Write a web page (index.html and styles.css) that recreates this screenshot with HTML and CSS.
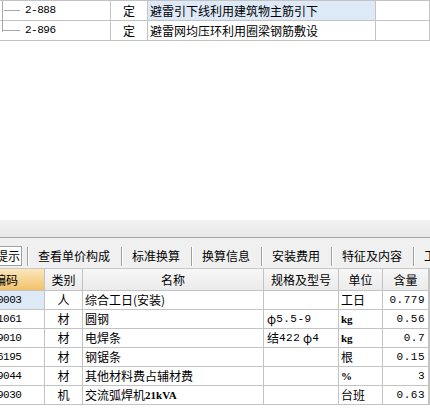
FILE: index.html
```html
<!DOCTYPE html>
<html lang="zh">
<head>
<meta charset="utf-8">
<link rel="stylesheet" href="styles.css">
</head>
<body>
<div class="top-grid">
  <span class="tree-v"></span>
  <div class="trow">
    <div class="cell tree"><span class="branch"></span><span class="num code">2-888</span></div>
    <div class="cell center">定</div>
    <div class="cell name sel">避雷引下线利用建筑物主筋引下</div>
    <div class="cell"></div>
  </div>
  <div class="trow">
    <div class="cell tree"><span class="branch last"></span><span class="num code">2-896</span></div>
    <div class="cell center">定</div>
    <div class="cell name">避雷网均压环利用圈梁钢筋敷设</div>
    <div class="cell"></div>
  </div>
</div>

<div class="blank"></div>
<div class="splitter"></div>

<div class="tabs">
  <div class="tabs-inner">
    <div class="tab active">提示</div>
    <span class="divider"></span>
    <div class="tab">查看单价构成</div>
    <span class="divider"></span>
    <div class="tab">标准换算</div>
    <span class="divider"></span>
    <div class="tab">换算信息</div>
    <span class="divider"></span>
    <div class="tab">安装费用</div>
    <span class="divider"></span>
    <div class="tab">特征及内容</div>
    <span class="divider"></span>
    <div class="tab">工程量明细</div>
  </div>
</div>

<div class="btable">
  <div class="brow bhead">
    <div class="cell hcell hsel"><span class="shift">编码</span></div>
    <div class="cell hcell">类别</div>
    <div class="cell hcell">名称</div>
    <div class="cell hcell">规格及型号</div>
    <div class="cell hcell">单位</div>
    <div class="cell hcell">含量</div>
    <div class="cell hcell"></div>
  </div>
  <div class="brow">
    <div class="cell rsel"><span class="num code shift3">0003</span></div>
    <div class="cell center">人</div>
    <div class="cell txt">综合工日(安装)</div>
    <div class="cell txt spec"></div>
    <div class="cell txt unit">工日</div>
    <div class="cell qty"><span class="num">0.779</span></div>
    <div class="cell"></div>
  </div>
  <div class="brow">
    <div class="cell"><span class="num code shift3">1061</span></div>
    <div class="cell center">材</div>
    <div class="cell txt">圆钢</div>
    <div class="cell txt spec">φ<span class="num">5.5-9</span></div>
    <div class="cell txt unit"><span class="ser">kg</span></div>
    <div class="cell qty"><span class="num">0.56</span></div>
    <div class="cell"></div>
  </div>
  <div class="brow">
    <div class="cell"><span class="num code shift3">9010</span></div>
    <div class="cell center">材</div>
    <div class="cell txt">电焊条</div>
    <div class="cell txt spec">结<span class="num">422</span>&nbsp;φ<span class="num">4</span></div>
    <div class="cell txt unit"><span class="ser">kg</span></div>
    <div class="cell qty"><span class="num">0.7</span></div>
    <div class="cell"></div>
  </div>
  <div class="brow">
    <div class="cell"><span class="num code shift3">6195</span></div>
    <div class="cell center">材</div>
    <div class="cell txt">钢锯条</div>
    <div class="cell txt spec"></div>
    <div class="cell txt unit">根</div>
    <div class="cell qty"><span class="num">0.15</span></div>
    <div class="cell"></div>
  </div>
  <div class="brow">
    <div class="cell"><span class="num code shift3">9044</span></div>
    <div class="cell center">材</div>
    <div class="cell txt">其他材料费占辅材费</div>
    <div class="cell txt spec"></div>
    <div class="cell txt unit"><span class="ser">%</span></div>
    <div class="cell qty"><span class="num">3</span></div>
    <div class="cell"></div>
  </div>
  <div class="brow">
    <div class="cell"><span class="num code shift3">9030</span></div>
    <div class="cell center">机</div>
    <div class="cell txt">交流弧焊机<span class="ser">21kVA</span></div>
    <div class="cell txt spec"></div>
    <div class="cell txt unit">台班</div>
    <div class="cell qty"><span class="num">0.63</span></div>
    <div class="cell"></div>
  </div>
</div>
</body>
</html>
```
FILE: styles.css
```css
* { box-sizing: border-box; }

body {
  margin: 0;
  width: 430px;
  height: 408px;
  overflow: hidden;
  background: #fff;
  color: #000;
  font-family: "Noto Sans CJK SC", "Noto Sans", sans-serif;
  font-size: 12px;
}

.cell {
  display: flex;
  align-items: center;
  overflow: hidden;
  white-space: nowrap;
  line-height: 1;
  border-right: 1px solid #c3c3c3;
  border-bottom: 1px solid #c3c3c3;
}

.center { justify-content: center; }

.num {
  font-family: "Liberation Mono", "DejaVu Sans Mono", monospace;
  font-size: 11px;
  letter-spacing: 0.5px;
}

.code { letter-spacing: -0.5px; }

.ser {
  font-family: "Liberation Serif", serif;
  font-size: 11px;
  font-weight: bold;
}

/* top tree grid */
.top-grid {
  position: relative;
  border-top: 1px solid #c3c3c3;
}

.tree-v {
  position: absolute;
  left: 2px;
  top: 0;
  width: 1px;
  height: 31px;
  background: #a8a8a8;
}

.trow {
  display: grid;
  grid-template-columns: 111px 37px 228px 54px;
  height: 20px;
}

.tree {
  padding-left: 4px;
}

.branch {
  width: 16px;
  height: 1px;
  background: #a8a8a8;
  margin-right: 5px;
}

.branch.last {
  margin-left: -2px;
  width: 18px;
}

.name { padding-left: 2px; }

.sel { background: #dde9f7; }

.blank { height: 179px; }

.splitter {
  height: 18px;
  background: linear-gradient(#f2f2f2, #e8e8e8);
  border-bottom: 1px solid #a6a6a6;
}

/* tabs */
.tabs {
  height: 31px;
  overflow: hidden;
  background: #f0f0f0;
  border-bottom: 1px solid #c8c8c8;
  padding-top: 8px;
}

.tabs-inner {
  display: flex;
  align-items: flex-start;
  margin-left: -8px;
  white-space: nowrap;
}

.tab {
  height: 20px;
  line-height: 20px;
  padding: 0 11px 0 9px;
  flex: none;
}

.tab.active {
  background: #fff;
  border: 1px solid #a0a0a0;
  padding: 0 1px 0 3px;
  line-height: 18px;
  margin-right: 5px;
}

.divider {
  flex: none;
  width: 2px;
  height: 19px;
  margin-top: 1px;
  border-left: 1px solid #a0a0a0;
  border-right: 1px solid #fff;
}

/* bottom table */
.brow {
  display: grid;
  grid-template-columns: 45px 38px 181px 75px 44px 46px 1fr;
  height: 19px;
}

.bhead { height: 22px; }

.hcell {
  justify-content: center;
  background: linear-gradient(#f7f7f7, #ebebeb);
}

.hsel {
  justify-content: flex-start;
  background: linear-gradient(#fbe6bb, #f2c26a);
}

.shift { margin-left: -6px; }
.shift3 { margin-left: -3px; }

.rsel { background: #dde9f7; }

.txt { padding-left: 2px; }
.spec { padding-left: 3px; }
.unit { padding-left: 2px; }

.qty {
  justify-content: flex-end;
  padding-right: 3px;
}
```
